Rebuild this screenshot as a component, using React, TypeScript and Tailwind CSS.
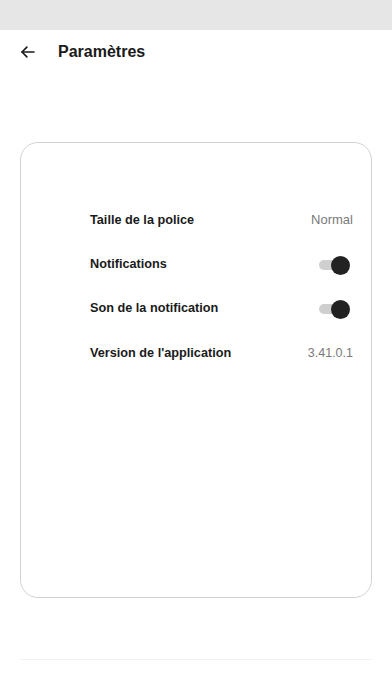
import React from "react";

function Toggle() {
  return (
    <div className="relative w-[31px] h-[18px] mr-[3px]">
      <div className="absolute left-0 top-[4px] w-[26px] h-[10px] rounded-full bg-[#cfcfcf]" />
      <div className="absolute right-0 top-0 w-[19px] h-[19px] rounded-full bg-[#222222]" />
    </div>
  );
}

function Row({ label, right }: { label: string; right: React.ReactNode }) {
  return (
    <div className="h-[44.4px] flex items-center justify-between pl-[69px] pr-[18px]">
      <span className="text-[12.7px] font-bold text-[#1a1a1a]">{label}</span>
      {right}
    </div>
  );
}

export default function App() {
  return (
    <div className="w-[392px] h-[696px] bg-white flex flex-col" style={{ fontFamily: "'Liberation Sans', Arial, sans-serif" }}>
      <div className="h-[30px] bg-[#e6e6e6]" />
      <div className="h-[44px] flex items-center px-[19px]">
        <svg width="18" height="18" viewBox="0 0 24 24" fill="none" stroke="#1a1a1a" strokeWidth="2.2" strokeLinecap="round" strokeLinejoin="round">
          <path d="M20 12H4" />
          <path d="M10.5 5.5L4 12l6.5 6.5" />
        </svg>
        <span className="ml-[21px] text-[16px] font-bold text-[#1a1a1a]">Paramètres</span>
      </div>
      <div className="mx-[20px] mt-[68px] h-[456px] border-[1.5px] border-[#d2d2d2] rounded-[18px] pt-[55px]">
        <Row label="Taille de la police" right={<span className="text-[13px] text-[#7a7a7a]">Normal</span>} />
        <Row label="Notifications" right={<Toggle />} />
        <Row label="Son de la notification" right={<Toggle />} />
        <Row label="Version de l'application" right={<span className="text-[12.5px] text-[#7a7a7a]">3.41.0.1</span>} />
      </div>
      <div className="mx-[20px] mt-[61px] h-px bg-[#f3f3f3]" />
    </div>
  );
}
